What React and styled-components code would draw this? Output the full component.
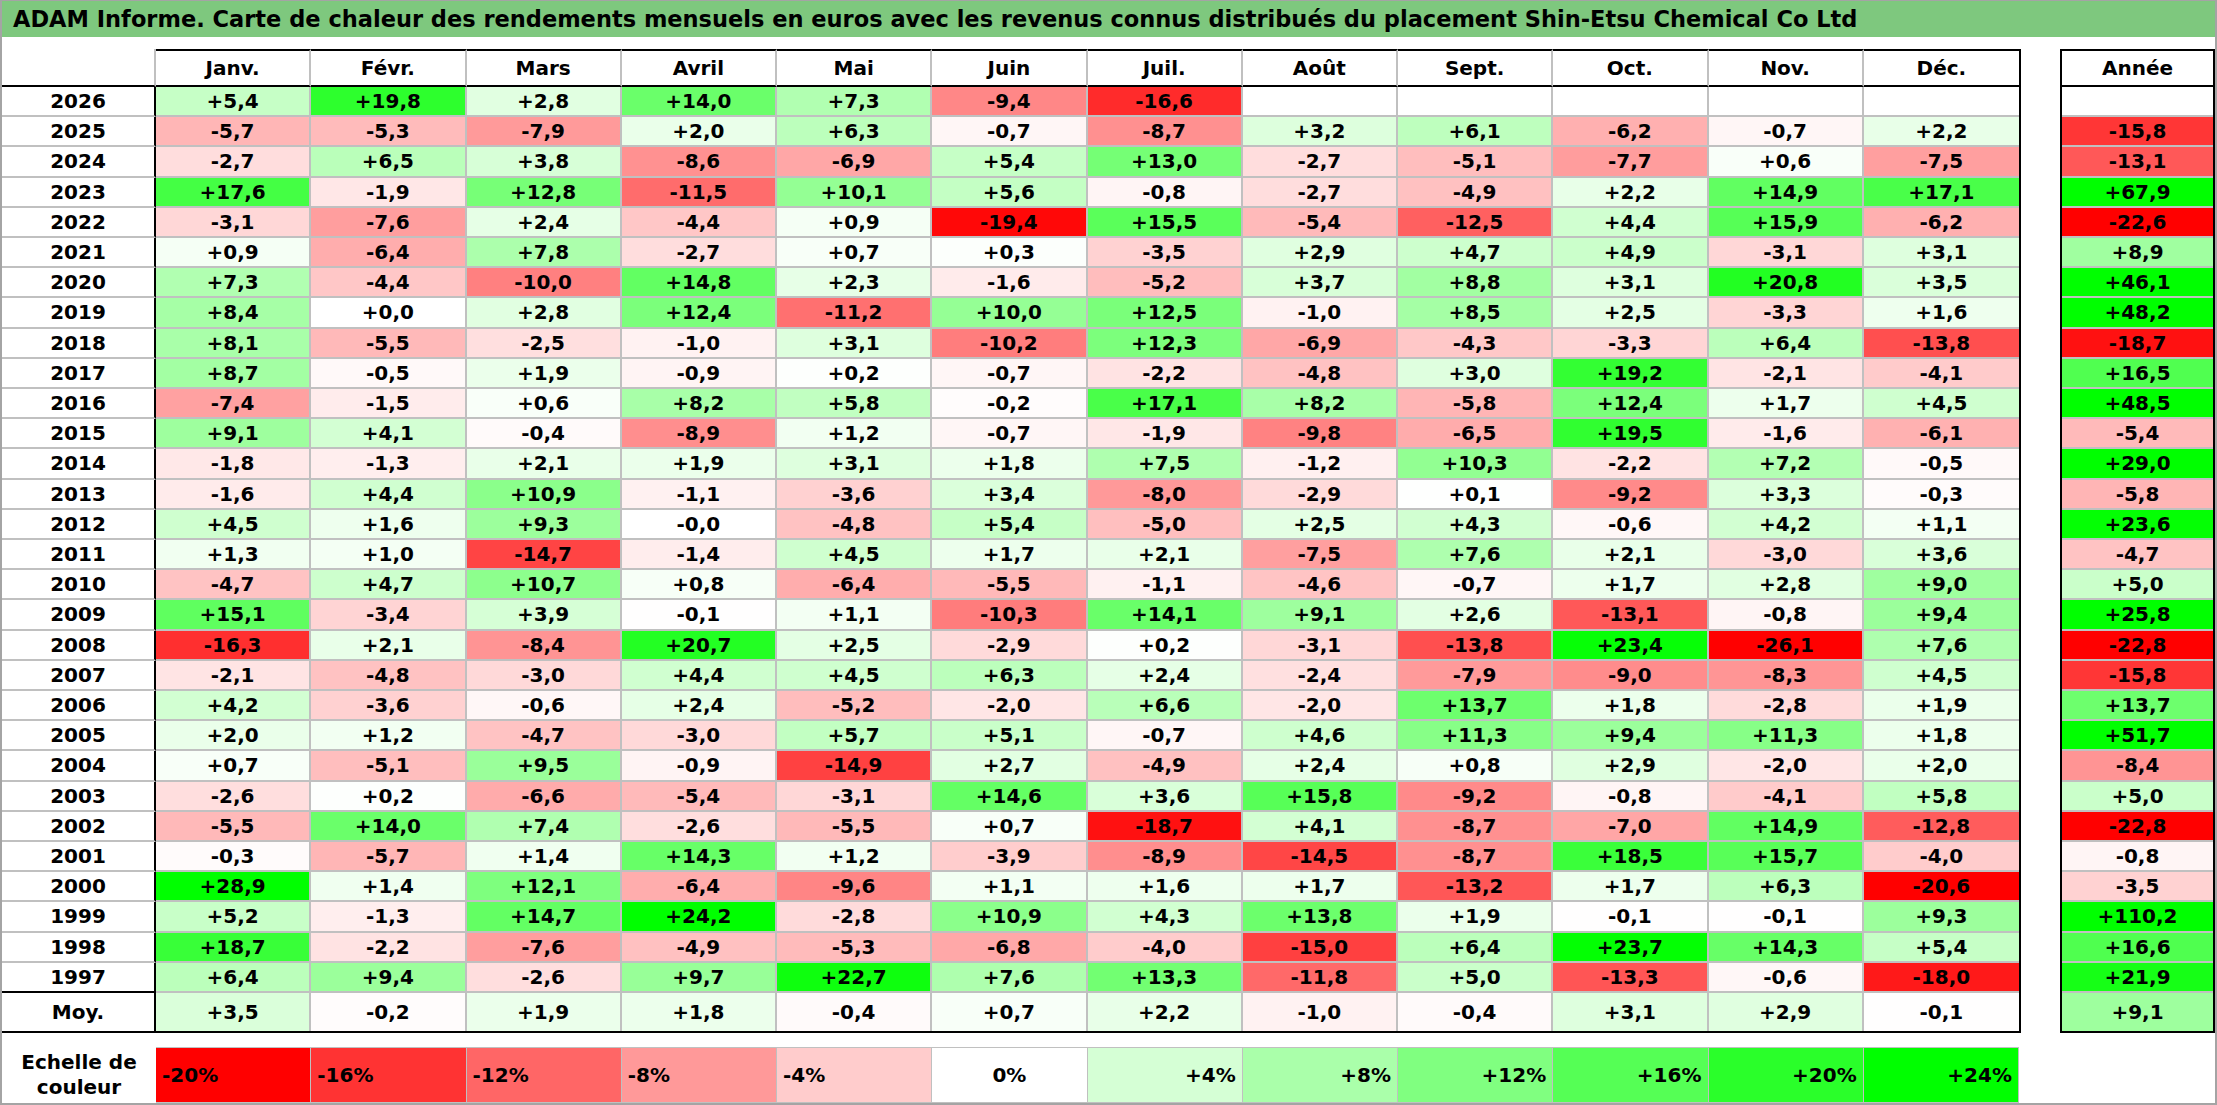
import React from "react"
import styled, { createGlobalStyle } from "styled-components"

const GlobalStyle = createGlobalStyle`
  html, body {
    margin: 0;
    padding: 0;
    background: #ffffff;
  }
  body {
    font-family: "DejaVu Sans", "Liberation Sans", sans-serif;
    color: #000;
  }
`

const GRID = "#c0c0c0"
const COLS = "154px repeat(12, 1fr)"

const Frame = styled.div`
  width: 2217px;
  height: 1105px;
  box-sizing: border-box;
  border: 2px solid #a4a4a4;
  border-top-width: 1px;
  display: flex;
  flex-direction: column;
  background: #fff;
`

const Title = styled.div`
  height: 36px;
  background: #7ec87e;
  padding-left: 11px;
  font-size: 22.5px;
  font-weight: bold;
  line-height: 36px;
  white-space: nowrap;
`

const Body = styled.div`
  display: flex;
  align-items: flex-start;
  padding-top: 12px;
  gap: 39px;
`

const Grid = styled.div`
  display: grid;
  grid-template-columns: ${(p) => p.$cols};
  grid-template-rows: 38px repeat(30, 1fr) 38px;
  width: ${(p) => p.$width}px;
  height: 984px;
  box-sizing: border-box;
  border-right: 2px solid #000;
  border-bottom: 2px solid #000;
  border-left: ${(p) => (p.$boxed ? "2px solid #000" : "none")};
`

const Cell = styled.div`
  display: flex;
  align-items: center;
  justify-content: center;
  box-sizing: border-box;
  font-size: 20px;
  font-weight: bold;
  white-space: nowrap;
  background: #fff;
  border-right: ${(p) => (p.$last ? "none" : `2px solid ${GRID}`)};
  border-bottom: ${(p) => (p.$bottom === "none" ? "none" : `2px solid ${p.$bottom === "black" ? "#000" : GRID}`)};
`

const HeadCell = styled(Cell)`
  border-top: ${(p) => (p.$blank ? "none" : "2px solid #000")};
  border-bottom: 2px solid #000;
`

const YearCell = styled(Cell)`
  border-right: 2px solid #000;
`

const Scale = styled.div`
  display: grid;
  grid-template-columns: ${COLS};
  width: 2017px;
  height: 56px;
  margin-top: 14px;
`

const ScaleLabel = styled.div`
  display: flex;
  align-items: center;
  justify-content: center;
  text-align: center;
  font-size: 20px;
  font-weight: bold;
  line-height: 25px;
`

const ScaleCell = styled.div`
  display: flex;
  align-items: center;
  justify-content: ${(p) => p.$align};
  padding: 0 6px;
  box-sizing: border-box;
  font-size: 20px;
  font-weight: bold;
  border: 1px solid ${GRID};
  border-left: none;
`

const MONTHS = ["Janv.", "Févr.", "Mars", "Avril", "Mai", "Juin", "Juil.", "Août", "Sept.", "Oct.", "Nov.", "Déc."]

const ROWS = [
  ["2026", "+5,4 +19,8 +2,8 +14,0 +7,3 -9,4 -16,6", ""],
  ["2025", "-5,7 -5,3 -7,9 +2,0 +6,3 -0,7 -8,7 +3,2 +6,1 -6,2 -0,7 +2,2", "-15,8"],
  ["2024", "-2,7 +6,5 +3,8 -8,6 -6,9 +5,4 +13,0 -2,7 -5,1 -7,7 +0,6 -7,5", "-13,1"],
  ["2023", "+17,6 -1,9 +12,8 -11,5 +10,1 +5,6 -0,8 -2,7 -4,9 +2,2 +14,9 +17,1", "+67,9"],
  ["2022", "-3,1 -7,6 +2,4 -4,4 +0,9 -19,4 +15,5 -5,4 -12,5 +4,4 +15,9 -6,2", "-22,6"],
  ["2021", "+0,9 -6,4 +7,8 -2,7 +0,7 +0,3 -3,5 +2,9 +4,7 +4,9 -3,1 +3,1", "+8,9"],
  ["2020", "+7,3 -4,4 -10,0 +14,8 +2,3 -1,6 -5,2 +3,7 +8,8 +3,1 +20,8 +3,5", "+46,1"],
  ["2019", "+8,4 +0,0 +2,8 +12,4 -11,2 +10,0 +12,5 -1,0 +8,5 +2,5 -3,3 +1,6", "+48,2"],
  ["2018", "+8,1 -5,5 -2,5 -1,0 +3,1 -10,2 +12,3 -6,9 -4,3 -3,3 +6,4 -13,8", "-18,7"],
  ["2017", "+8,7 -0,5 +1,9 -0,9 +0,2 -0,7 -2,2 -4,8 +3,0 +19,2 -2,1 -4,1", "+16,5"],
  ["2016", "-7,4 -1,5 +0,6 +8,2 +5,8 -0,2 +17,1 +8,2 -5,8 +12,4 +1,7 +4,5", "+48,5"],
  ["2015", "+9,1 +4,1 -0,4 -8,9 +1,2 -0,7 -1,9 -9,8 -6,5 +19,5 -1,6 -6,1", "-5,4"],
  ["2014", "-1,8 -1,3 +2,1 +1,9 +3,1 +1,8 +7,5 -1,2 +10,3 -2,2 +7,2 -0,5", "+29,0"],
  ["2013", "-1,6 +4,4 +10,9 -1,1 -3,6 +3,4 -8,0 -2,9 +0,1 -9,2 +3,3 -0,3", "-5,8"],
  ["2012", "+4,5 +1,6 +9,3 -0,0 -4,8 +5,4 -5,0 +2,5 +4,3 -0,6 +4,2 +1,1", "+23,6"],
  ["2011", "+1,3 +1,0 -14,7 -1,4 +4,5 +1,7 +2,1 -7,5 +7,6 +2,1 -3,0 +3,6", "-4,7"],
  ["2010", "-4,7 +4,7 +10,7 +0,8 -6,4 -5,5 -1,1 -4,6 -0,7 +1,7 +2,8 +9,0", "+5,0"],
  ["2009", "+15,1 -3,4 +3,9 -0,1 +1,1 -10,3 +14,1 +9,1 +2,6 -13,1 -0,8 +9,4", "+25,8"],
  ["2008", "-16,3 +2,1 -8,4 +20,7 +2,5 -2,9 +0,2 -3,1 -13,8 +23,4 -26,1 +7,6", "-22,8"],
  ["2007", "-2,1 -4,8 -3,0 +4,4 +4,5 +6,3 +2,4 -2,4 -7,9 -9,0 -8,3 +4,5", "-15,8"],
  ["2006", "+4,2 -3,6 -0,6 +2,4 -5,2 -2,0 +6,6 -2,0 +13,7 +1,8 -2,8 +1,9", "+13,7"],
  ["2005", "+2,0 +1,2 -4,7 -3,0 +5,7 +5,1 -0,7 +4,6 +11,3 +9,4 +11,3 +1,8", "+51,7"],
  ["2004", "+0,7 -5,1 +9,5 -0,9 -14,9 +2,7 -4,9 +2,4 +0,8 +2,9 -2,0 +2,0", "-8,4"],
  ["2003", "-2,6 +0,2 -6,6 -5,4 -3,1 +14,6 +3,6 +15,8 -9,2 -0,8 -4,1 +5,8", "+5,0"],
  ["2002", "-5,5 +14,0 +7,4 -2,6 -5,5 +0,7 -18,7 +4,1 -8,7 -7,0 +14,9 -12,8", "-22,8"],
  ["2001", "-0,3 -5,7 +1,4 +14,3 +1,2 -3,9 -8,9 -14,5 -8,7 +18,5 +15,7 -4,0", "-0,8"],
  ["2000", "+28,9 +1,4 +12,1 -6,4 -9,6 +1,1 +1,6 +1,7 -13,2 +1,7 +6,3 -20,6", "-3,5"],
  ["1999", "+5,2 -1,3 +14,7 +24,2 -2,8 +10,9 +4,3 +13,8 +1,9 -0,1 -0,1 +9,3", "+110,2"],
  ["1998", "+18,7 -2,2 -7,6 -4,9 -5,3 -6,8 -4,0 -15,0 +6,4 +23,7 +14,3 +5,4", "+16,6"],
  ["1997", "+6,4 +9,4 -2,6 +9,7 +22,7 +7,6 +13,3 -11,8 +5,0 -13,3 -0,6 -18,0", "+21,9"],
]

const AVG = ["Moy.", "+3,5 -0,2 +1,9 +1,8 -0,4 +0,7 +2,2 -1,0 -0,4 +3,1 +2,9 -0,1", "+9,1"]

const SCALE = [-20, -16, -12, -8, -4, 0, 4, 8, 12, 16, 20, 24]

// white -> green up to +24, white -> red down to -20
function heat(text) {
  if (!text) return "#ffffff"
  const v = parseFloat(text.replace(",", "."))
  if (v >= 0) {
    const c = Math.round(255 * (1 - Math.min(v / 24, 1)))
    return `rgb(${c},255,${c})`
  }
  const c = Math.round(255 * (1 - Math.min(-v / 20, 1)))
  return `rgb(255,${c},${c})`
}

function cells(str) {
  const list = str.split(" ").filter(Boolean)
  while (list.length < 12) list.push("")
  return list
}

const allRows = [...ROWS, AVG]

function MonthTable() {
  return (
    <Grid $cols={COLS} $width={2019}>
      <HeadCell $blank />
      {MONTHS.map((m, i) => (
        <HeadCell key={m} $last={i === 11}>
          {m}
        </HeadCell>
      ))}
      {allRows.map(([year, values], r) => {
        const isAvg = r === allRows.length - 1
        const bottom = isAvg ? "none" : "grey"
        return (
          <React.Fragment key={year}>
            <YearCell $bottom={r === allRows.length - 2 ? "black" : bottom}>{year}</YearCell>
            {cells(values).map((v, i) => (
              <Cell key={i} $last={i === 11} $bottom={bottom} style={{ background: heat(v) }}>
                {v}
              </Cell>
            ))}
          </React.Fragment>
        )
      })}
    </Grid>
  )
}

function YearTable() {
  return (
    <Grid $cols="1fr" $width={155} $boxed>
      <HeadCell $last>Année</HeadCell>
      {allRows.map(([year, , total], r) => (
        <Cell
          key={year}
          $last
          $bottom={r === allRows.length - 1 ? "none" : "grey"}
          style={{ background: heat(total) }}
        >
          {total}
        </Cell>
      ))}
    </Grid>
  )
}

function ColourScale() {
  return (
    <Scale>
      <ScaleLabel>
        Echelle de
        <br />
        couleur
      </ScaleLabel>
      {SCALE.map((s) => (
        <ScaleCell
          key={s}
          $align={s < 0 ? "flex-start" : s === 0 ? "center" : "flex-end"}
          style={{ background: heat(String(s)) }}
        >
          {s > 0 ? `+${s}%` : `${s}%`}
        </ScaleCell>
      ))}
    </Scale>
  )
}

export default function App() {
  return (
    <>
      <GlobalStyle />
      <Frame>
        <Title>
          ADAM Informe. Carte de chaleur des rendements mensuels en euros avec les revenus connus distribués du
          placement Shin-Etsu Chemical Co Ltd
        </Title>
        <Body>
          <MonthTable />
          <YearTable />
        </Body>
        <ColourScale />
      </Frame>
    </>
  )
}
